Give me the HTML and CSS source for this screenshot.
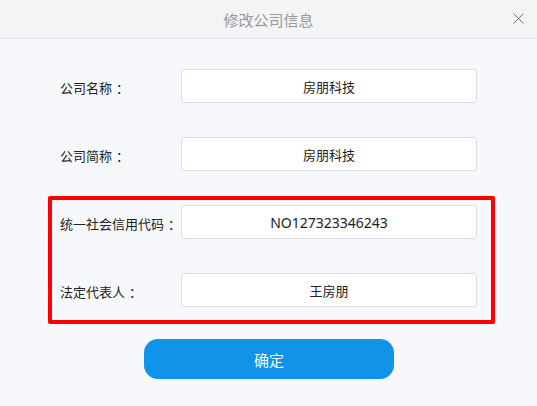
FILE: index.html
```html
<!DOCTYPE html>
<html lang="zh">
<head>
<meta charset="utf-8">
<title>修改公司信息</title>
<link rel="stylesheet" href="styles.css">
</head>
<body>
<div class="dialog">
  <div class="header">
    <span class="title">修改公司信息</span>
    <span class="close">
      <svg width="11" height="11" viewBox="0 0 11 11"><path d="M0.5 0.5 L10.5 10.5 M10.5 0.5 L0.5 10.5" stroke="#6b6e76" stroke-width="1" fill="none"/></svg>
    </span>
  </div>
  <div class="body">
    <div class="rows">
      <div class="row"><label class="label">公司名称<span class="colon">：</span></label><div class="input">房朋科技</div></div>
      <div class="row"><label class="label">公司简称<span class="colon">：</span></label><div class="input">房朋科技</div></div>
      <div class="group">
        <div class="row"><label class="label">统一社会信用代码<span class="colon">：</span></label><div class="input latin">NO127323346243</div></div>
        <div class="row"><label class="label">法定代表人<span class="colon">：</span></label><div class="input">王房朋</div></div>
      </div>
    </div>
    <div class="actions"><button class="btn">确定</button></div>
  </div>
</div>
</body>
</html>
```
FILE: styles.css
```css
html, body {
  margin: 0;
  padding: 0;
  background: #f7f8fb;
  font-family: "Noto Sans", "Noto Sans CJK SC", sans-serif;
}
.dialog {
  width: 537px;
  height: 406px;
  background: #f7f8fb;
}
.header {
  height: 38px;
  background: #f3f4f6;
  border-bottom: 1px solid #dfe0e2;
  display: flex;
  align-items: center;
  justify-content: center;
  position: relative;
}
.title {
  font-size: 15px;
  color: #999;
}
.close {
  position: absolute;
  left: 513px;
  top: 13px;
  width: 11px;
  height: 11px;
  display: flex;
}
.body {
  padding: 30px 60px 0 60px;
}
.rows {
  display: flex;
  flex-direction: column;
  gap: 34px;
}
.group {
  display: flex;
  flex-direction: column;
  gap: 34px;
  border: 4px solid #ff0000;
  border-radius: 2px;
  padding: 5px 14px 13px 8px;
  margin: -9px -18px -17px -12px;
}
.row {
  display: flex;
  align-items: center;
  height: 34px;
}
.label {
  width: 121px;
  flex: none;
  font-size: 13px;
  color: #222;
  padding-top: 3px;
  white-space: nowrap;
}
.colon {
  padding-left: 4px;
}
.input {
  flex: 1;
  height: 32px;
  border: 1px solid #dcdfe6;
  border-radius: 3px;
  background: #fff;
  display: flex;
  align-items: center;
  justify-content: center;
  font-size: 13px;
  color: #222;
}
.input.latin {
  font-size: 14px;
}
.actions {
  display: flex;
  justify-content: center;
  margin-top: 32px;
  padding-left: 1px;
}
.btn {
  width: 250px;
  height: 40px;
  border: none;
  border-radius: 14px;
  background: #1193ea;
  color: #fff;
  font-size: 15px;
  font-family: "Noto Sans", "Noto Sans CJK SC", sans-serif;
}
```
